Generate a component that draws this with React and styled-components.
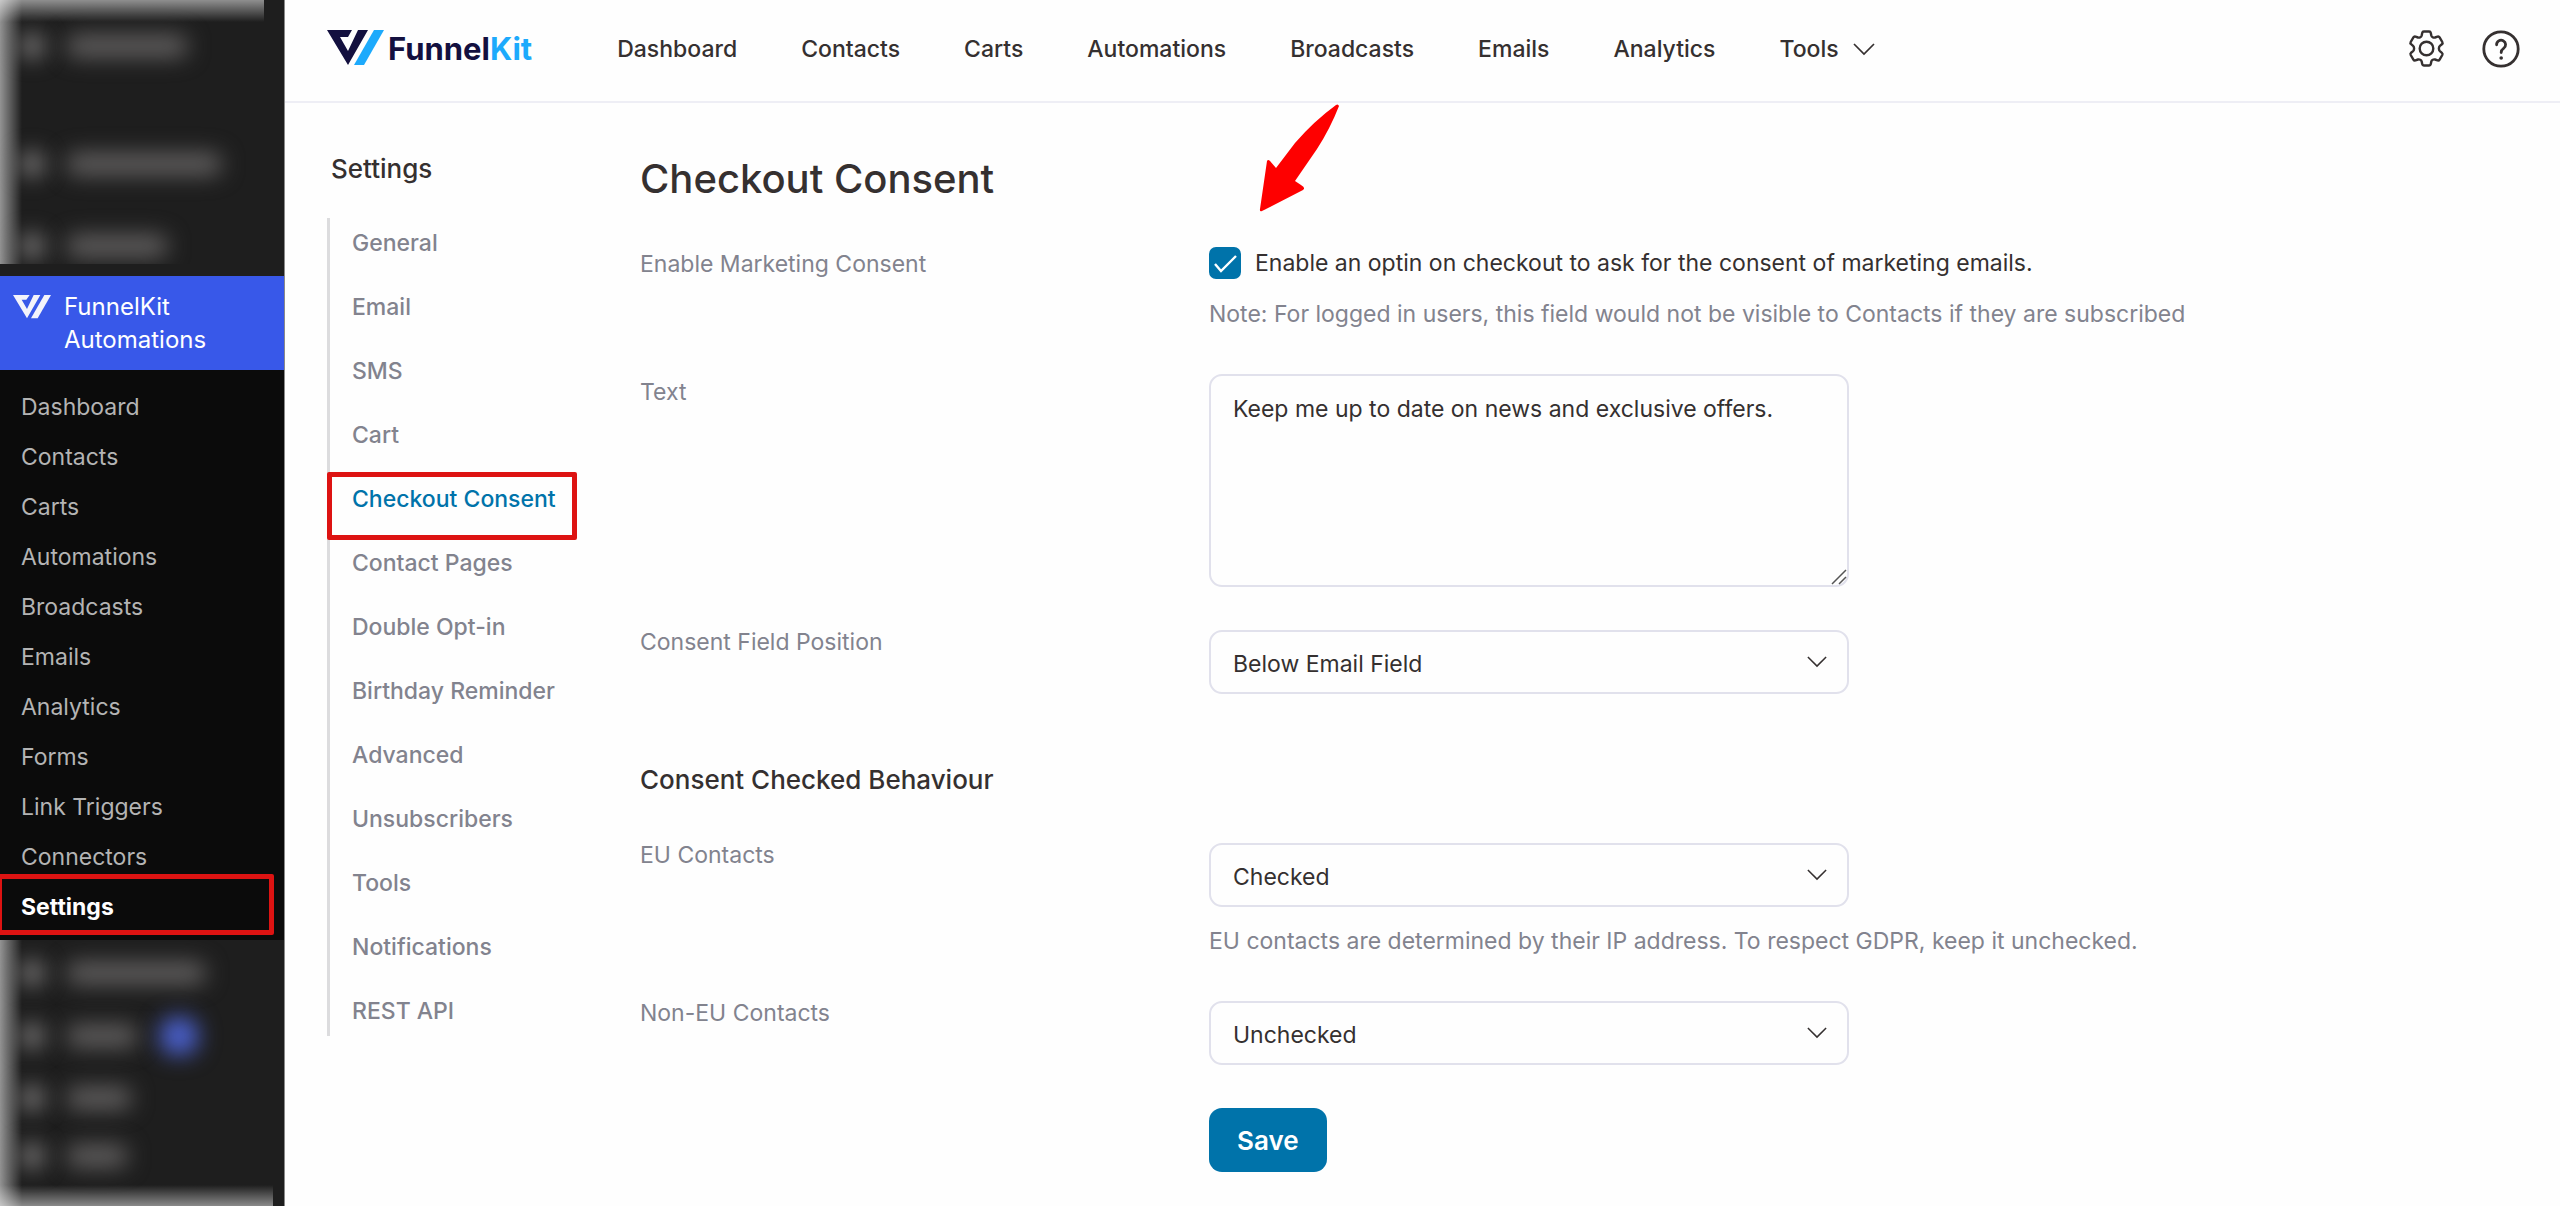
import React, { useState } from 'react';
import styled, { createGlobalStyle } from 'styled-components';

const GlobalStyle = createGlobalStyle`
  * {
    box-sizing: border-box;
  }
  body {
    margin: 0;
    background: #fefefe;
    color: #353030;
    font-family: Inter, 'Liberation Sans', sans-serif;
    font-size: 23px;
  }
  h1, h2, p, ul {
    margin: 0;
    padding: 0;
  }
  ul {
    list-style: none;
  }
  a {
    color: inherit;
    text-decoration: none;
  }
`;

const Page = styled.div`
  display: flex;
  min-height: 100vh;
`;

/* admin sidebar */
const AdminBar = styled.aside`
  display: flex;
  flex-direction: column;
  flex: none;
  width: 285px;
  background: #1e1e1e;
  border-right: 1px solid #8a8a8a;
`;
const Hidden = styled.div`
  width: ${(props) => props.$width};
  flex: ${(props) => (props.$grow ? '1' : 'none')};
  padding-bottom: ${(props) => (props.$grow ? '32px' : '0')};
  overflow: hidden;
  background:
    linear-gradient(90deg, rgba(255, 255, 255, 0.52), rgba(255, 255, 255, 0) 22px),
    linear-gradient(
      ${(props) => (props.$grow ? '0deg' : '180deg')},
      rgba(255, 255, 255, 0.5),
      rgba(255, 255, 255, 0) 22px
    );
`;
const HiddenRow = styled.div`
  display: flex;
  align-items: center;
  gap: 22px;
  height: 36px;
  margin-top: ${(props) => props.$space}px;
  padding-left: 20px;
`;
const Smudge = styled.span`
  flex: none;
  width: ${(props) => props.$width}px;
  height: ${(props) => props.$height || 22}px;
  border-radius: 15px;
  background: ${(props) => props.$color || '#626060'};
  filter: blur(11px);
`;
const Plugin = styled.a`
  display: flex;
  gap: 13px;
  margin-top: 12px;
  padding: 14px 13px;
  background: #3858e9;
  color: #fff;
  font-size: 24px;
  line-height: 33px;
`;
const PluginMark = styled.svg`
  flex: none;
  width: 38px;
  height: 24px;
  margin-top: 5px;
`;
const SubMenu = styled.ul`
  padding: 12px 0 8px;
  background: #0b0b0b;
`;
const SubItem = styled.li`
  position: relative;
  padding-left: 21px;
  line-height: 50px;
  color: ${(props) => (props.$active ? '#fff' : '#b4b4b4')};
  font-weight: ${(props) => (props.$active ? 700 : 400)};
`;
const Marker = styled.span`
  position: absolute;
  inset: ${(props) => props.$inset};
  border: 5px solid #dd1312;
  border-radius: 2px;
  pointer-events: none;
`;

/* top bar */
const Content = styled.div`
  flex: 1;
  min-width: 0;
`;
const Header = styled.header`
  display: flex;
  align-items: center;
  height: 103px;
  padding: 0 40px 4px 42px;
  border-bottom: 2px solid #eeeef5;
`;
const Brand = styled.a`
  display: flex;
  align-items: center;
  gap: 4px;
  margin-right: 85px;
  color: #13103f;
  font-size: 31px;
  font-weight: 700;
  line-height: 38px;
`;
const BrandMark = styled.svg`
  width: 57px;
  height: 38px;
`;
const BrandAccent = styled.span`
  color: #1daafc;
`;
const Nav = styled.nav`
  display: flex;
  gap: 64px;
  font-weight: 500;
`;
const NavLink = styled.a`
  display: flex;
  align-items: center;
  gap: 14px;
`;
const Actions = styled.div`
  display: flex;
  gap: 37px;
  margin-left: auto;
`;
const IconButton = styled.button`
  display: flex;
  padding: 0;
  border: 0;
  background: none;
  color: #353030;
`;

/* settings */
const Body = styled.div`
  display: flex;
  padding: 48px 42px 35px;
`;
const Side = styled.div`
  flex: none;
  width: 313px;
`;
const SideTitle = styled.h2`
  margin-bottom: 31px;
  padding-left: 4px;
  font-size: 26px;
  font-weight: 500;
  line-height: 36px;
`;
const SideMenu = styled.ul`
  display: flex;
  flex-direction: column;
  gap: 14px;
  border-left: 3px solid #dcdcde;
`;
const SideItem = styled.li`
  position: relative;
  padding-left: 22px;
  line-height: 50px;
  font-weight: 500;
  color: ${(props) => (props.$active ? '#0073aa' : '#82838e')};
`;
const Form = styled.form`
  flex: 1;
`;
const Title = styled.h1`
  margin-bottom: 39px;
  font-size: 40px;
  font-weight: 500;
  line-height: 56px;
`;
const Row = styled.div`
  display: grid;
  grid-template-columns: 569px 1fr;
  margin-bottom: 43px;
`;
const Label = styled.label`
  padding-top: ${(props) => (props.$low ? '6px' : '0')};
  color: #82838e;
  line-height: 24px;
`;
const Control = styled.div`
  position: relative;
`;
const Note = styled.p`
  margin-top: 17px;
  color: #82838e;
  line-height: 34px;
`;
const CheckLine = styled.div`
  display: flex;
  align-items: center;
  gap: 14px;
  height: 34px;
`;
const CheckBox = styled.span`
  position: relative;
  display: flex;
`;
const CheckInput = styled.input`
  appearance: none;
  width: 32px;
  height: 32px;
  margin: 0;
  border: 2px solid #0073aa;
  border-radius: 7px;
  &:checked {
    background: #0073aa;
  }
`;
const Tick = styled.svg`
  position: absolute;
  inset: 0;
  pointer-events: none;
`;
const Field = styled.div`
  position: relative;
  max-width: 640px;
`;
const TextArea = styled.textarea`
  display: block;
  width: 100%;
  height: 213px;
  padding: 16px 22px;
  border: 2px solid #e1e1ec;
  border-radius: 13px;
  background: #fefefe;
  color: inherit;
  font: inherit;
  line-height: 34px;
  resize: none;
`;
const Grip = styled.svg`
  position: absolute;
  right: 2px;
  bottom: 2px;
`;
const Select = styled.select`
  appearance: none;
  display: block;
  width: 100%;
  height: 64px;
  padding: 4px 60px 0 22px;
  border: 2px solid #e1e1ec;
  border-radius: 13px;
  background: #fefefe;
  color: inherit;
  font: inherit;
`;
const SelectArrow = styled.span`
  position: absolute;
  top: 25px;
  right: 22px;
  display: flex;
  pointer-events: none;
`;
const SectionTitle = styled.h2`
  margin: 68px 0 45px;
  font-size: 26px;
  font-weight: 500;
  line-height: 36px;
`;
const SaveButton = styled.button`
  height: 64px;
  margin-left: 569px;
  padding: 0 28px;
  border: 0;
  border-radius: 13px;
  background: #0073aa;
  color: #fff;
  font: inherit;
  font-size: 26px;
  font-weight: 600;
`;
const Pointer = styled.svg`
  position: absolute;
  left: 50px;
  top: -142px;
  pointer-events: none;
`;

const Chevron = ({ size }) => (
  <svg width={size} height={size / 2 + 3} viewBox='0 0 22 14' fill='none'>
    <path d='M1 2l10 10L21 2' stroke='#353030' strokeWidth='1.7' />
  </svg>
);

const GearIcon = () => (
  <svg
    width='37'
    height='37'
    viewBox='-18.5 -18.5 37 37'
    fill='none'
    stroke='currentColor'
    strokeWidth='2.4'
    strokeLinejoin='round'
  >
    <path d='M-2.7 -17H2.7Q4 -17 4.3 -15.6L4.8 -13Q5.1 -11.9 6.2 -11.3Q7.3 -10.6 8.5 -11L11 -11.9Q12.4 -12.3 13.1 -11.1L15.8 -6.5Q16.5 -5.2 15.4 -4.3L13.4 -2.6Q12.4 -1.7 12.4 0Q12.4 1.7 13.4 2.6L15.4 4.3Q16.5 5.2 15.8 6.5L13.1 11.1Q12.4 12.3 11 11.9L8.5 11Q7.3 10.6 6.2 11.3Q5.1 11.9 4.8 13L4.3 15.6Q4 17 2.7 17H-2.7Q-4 17 -4.3 15.6L-4.8 13Q-5.1 11.9 -6.2 11.3Q-7.3 10.6 -8.5 11L-11 11.9Q-12.4 12.3 -13.1 11.1L-15.8 6.5Q-16.5 5.2 -15.4 4.3L-13.4 2.6Q-12.4 1.7 -12.4 0Q-12.4 -1.7 -13.4 -2.6L-15.4 -4.3Q-16.5 -5.2 -15.8 -6.5L-13.1 -11.1Q-12.4 -12.3 -11 -11.9L-8.5 -11Q-7.3 -10.6 -6.2 -11.3Q-5.1 -11.9 -4.8 -13L-4.3 -15.6Q-4 -17 -2.7 -17Z' />
    <circle r='6.8' />
  </svg>
);

const HelpIcon = () => (
  <svg
    width='38'
    height='38'
    viewBox='-19 -19 38 38'
    fill='none'
    stroke='currentColor'
    strokeWidth='2.8'
    strokeLinecap='round'
  >
    <circle r='17.2' />
    <path d='M-4.4 -4.2A4.5 4.5 0 1 1 2.6 -0.6Q0.2 1 0.2 3.6' />
    <circle cx='0.2' cy='9' r='1.8' fill='currentColor' stroke='none' />
  </svg>
);

const adminLinks = [
  'Dashboard',
  'Contacts',
  'Carts',
  'Automations',
  'Broadcasts',
  'Emails',
  'Analytics',
  'Forms',
  'Link Triggers',
  'Connectors',
  'Settings',
];
const navLinks = ['Dashboard', 'Contacts', 'Carts', 'Automations', 'Broadcasts', 'Emails', 'Analytics', 'Tools'];
const settingsLinks = [
  'General',
  'Email',
  'SMS',
  'Cart',
  'Checkout Consent',
  'Contact Pages',
  'Double Opt-in',
  'Birthday Reminder',
  'Advanced',
  'Unsubscribers',
  'Tools',
  'Notifications',
  'REST API',
];
const hiddenTop = [
  { space: 28, width: 122 },
  { space: 82, width: 156 },
  { space: 46, width: 102 },
];
const hiddenBottom = [
  { space: 15, width: 140 },
  { space: 27, width: 72, badge: true },
  { space: 26, width: 66 },
  { space: 22, width: 62 },
];

const HiddenItems = ({ items }) =>
  items.map((item, i) => (
    <HiddenRow key={i} $space={item.space}>
      <Smudge $width={24} $height={24} $color='#848282' />
      <Smudge $width={item.width} />
      {item.badge ? <Smudge $width={38} $height={38} $color='#4a60cc' /> : ''}
    </HiddenRow>
  ));

const SelectField = ({ id, value, options }) => {
  const [selected, setSelected] = useState(value);
  return (
    <Field>
      <Select id={id} value={selected} onChange={(e) => setSelected(e.target.value)}>
        {options.map((option) => (
          <option key={option}>{option}</option>
        ))}
      </Select>
      <SelectArrow>
        <Chevron size={20} />
      </SelectArrow>
    </Field>
  );
};

const Sidebar = () => (
  <AdminBar>
    <Hidden $width='264px'>
      <HiddenItems items={hiddenTop} />
    </Hidden>
    <Plugin href='#'>
      <PluginMark viewBox='0 0 57 36' fill='#f3f3fb'>
        <path d='M0 0H25L20 7H13L21 21L31 0H41L21 35Z' />
        <path d='M47 0H57L37 35H27Z' />
      </PluginMark>
      <span>
        FunnelKit
        <br />
        Automations
      </span>
    </Plugin>
    <SubMenu>
      {adminLinks.map((link) => (
        <SubItem key={link} $active={link === 'Settings'}>
          <a href='#'>{link}</a>
          {link === 'Settings' ? <Marker $inset='-8px 10px -3px -3px' /> : ''}
        </SubItem>
      ))}
    </SubMenu>
    <Hidden $width='273px' $grow>
      <HiddenItems items={hiddenBottom} />
    </Hidden>
  </AdminBar>
);

const App = () => {
  const [enabled, setEnabled] = useState(true);
  const [text, setText] = useState('Keep me up to date on news and exclusive offers.');

  return (
    <Page>
      <GlobalStyle />
      <Sidebar />
      <Content>
        <Header>
          <Brand href='#'>
            <BrandMark viewBox='0 0 57 38'>
              <path d='M0 0H25L21 7H13L21 21L31 0H41L21 35Z' fill='#13103f' />
              <path d='M47 0H57L37 35H27Z' fill='#1daafc' />
            </BrandMark>
            <span>
              Funnel<BrandAccent>Kit</BrandAccent>
            </span>
          </Brand>
          <Nav>
            {navLinks.map((link) => (
              <NavLink href='#' key={link}>
                {link}
                {link === 'Tools' ? <Chevron size={22} /> : ''}
              </NavLink>
            ))}
          </Nav>
          <Actions>
            <IconButton type='button' aria-label='Settings'>
              <GearIcon />
            </IconButton>
            <IconButton type='button' aria-label='Help'>
              <HelpIcon />
            </IconButton>
          </Actions>
        </Header>
        <Body>
          <Side>
            <SideTitle>Settings</SideTitle>
            <SideMenu>
              {settingsLinks.map((link) => (
                <SideItem key={link} $active={link === 'Checkout Consent'}>
                  <a href='#'>{link}</a>
                  {link === 'Checkout Consent' ? <Marker $inset='-2px 63px -16px -3px' /> : ''}
                </SideItem>
              ))}
            </SideMenu>
          </Side>
          <Form onSubmit={(e) => e.preventDefault()}>
            <Title>Checkout Consent</Title>
            <Row>
              <Label $low htmlFor='enable'>
                Enable Marketing Consent
              </Label>
              <Control>
                <CheckLine>
                  <CheckBox>
                    <CheckInput
                      id='enable'
                      type='checkbox'
                      checked={enabled}
                      onChange={(e) => setEnabled(e.target.checked)}
                    />
                    {enabled ? (
                      <Tick viewBox='0 0 32 32' fill='none'>
                        <path d='M6 17l6 7L27 9' stroke='#fff' strokeWidth='2.4' />
                      </Tick>
                    ) : (
                      ''
                    )}
                  </CheckBox>
                  <label htmlFor='enable'>
                    Enable an optin on checkout to ask for the consent of marketing emails.
                  </label>
                </CheckLine>
                <Note>
                  Note: For logged in users, this field would not be visible to Contacts if they are subscribed
                </Note>
                <Pointer width='82' height='108' viewBox='0 0 82 108' fill='#fe0000'>
                  <path d='M77 1Q79 -0.5 80 2Q71 25 58 45L36 77L42 81Q47 84 44 86L3 107Q0.5 108 1 105L8 57Q9 55 11 57L17 64L36 39Q55 17 77 1Z' />
                </Pointer>
              </Control>
            </Row>
            <Row>
              <Label $low htmlFor='text'>
                Text
              </Label>
              <Field>
                <TextArea id='text' value={text} onChange={(e) => setText(e.target.value)} />
                <Grip width='16' height='16' viewBox='0 0 16 16' stroke='#555' strokeWidth='1.5'>
                  <path d='M1 15L15 1M8 15L15 8' />
                </Grip>
              </Field>
            </Row>
            <Row>
              <Label htmlFor='position'>Consent Field Position</Label>
              <SelectField
                id='position'
                value='Below Email Field'
                options={['Below Email Field', 'Below Order Button']}
              />
            </Row>
            <SectionTitle>Consent Checked Behaviour</SectionTitle>
            <Row>
              <Label htmlFor='eu'>EU Contacts</Label>
              <div>
                <SelectField id='eu' value='Checked' options={['Checked', 'Unchecked']} />
                <Note>EU contacts are determined by their IP address. To respect GDPR, keep it unchecked.</Note>
              </div>
            </Row>
            <Row>
              <Label htmlFor='non-eu'>Non-EU Contacts</Label>
              <SelectField id='non-eu' value='Unchecked' options={['Checked', 'Unchecked']} />
            </Row>
            <SaveButton type='submit'>Save</SaveButton>
          </Form>
        </Body>
      </Content>
    </Page>
  );
};

export default App;
